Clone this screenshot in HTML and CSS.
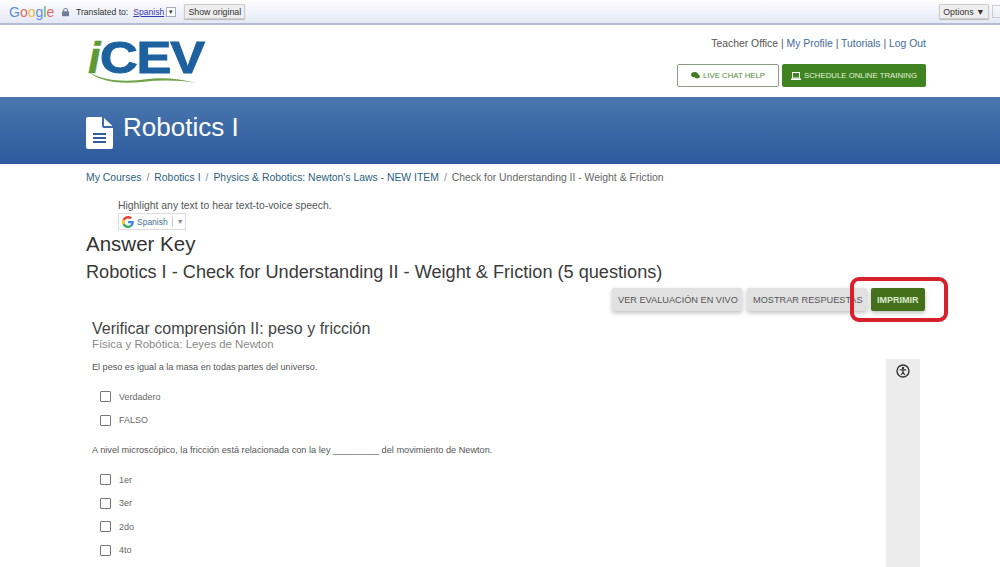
FILE: index.html
```html
<!DOCTYPE html>
<html lang="en">
<head>
    <meta charset="UTF-8">
    <title>Robotics I</title>
    <link rel="stylesheet" href="styles.css">
</head>
<body>
    <div class="translate-bar">
        <span class="google-word"><span class="g-blue">G</span><span class="g-red">o</span><span class="g-yellow">o</span><span class="g-blue">g</span><span class="g-green">l</span><span class="g-red">e</span></span>
        <svg class="lock" width="7" height="10" viewBox="0 0 9 11"><path d="M2 5V3.4a2.5 2.5 0 0 1 5 0V5" fill="none" stroke="#6f7f99" stroke-width="1.3"/><rect y="4.600" width="9" height="6.400" rx="1" fill="#6f7f99"/></svg>
        <span class="translated">Translated to:</span>
        <a class="lang-link">Spanish</a>
        <span class="lang-drop">▾</span>
        <button class="show-original">Show original</button>
        <button class="options">Options ▼</button>
        <span class="bar-close"></span>
    </div>

    <header class="site-header">
        <div class="logo">
            <div class="logo-word"><span class="logo-i">i</span><span class="logo-cev">CEV</span></div>
            <svg class="logo-swoosh" width="108" height="12" viewBox="0 0 108 12"><path d="M0 1C14 8 30 10 50 8 70 5 88 6 106 11 88 8 70 8 52 10 30 12 12 10 0 1Z" fill="#6fa548"/></svg>
        </div>
        <div class="header-right">
            <div class="user-links"><span>Teacher Office</span> | <a>My Profile</a> | <a>Tutorials</a> | <a>Log Out</a></div>
            <div class="header-btns">
                <a class="btn-chat">
                    <svg width="9" height="7" viewBox="0 0 10 8"><ellipse cx="4" cy="3" rx="4" ry="3" fill="#3f7d22"/><ellipse cx="7" cy="5" rx="3" ry="2.400" fill="#3f7d22"/></svg>
                    LIVE CHAT HELP
                </a>
                <a class="btn-train">
                    <svg width="10" height="8" viewBox="0 0 10 8"><rect x="1.500" y="0.500" width="7" height="5.500" fill="none" stroke="#fff"/><rect y="6.500" width="10" height="1.500" fill="#fff"/></svg>
                    SCHEDULE ONLINE TRAINING
                </a>
            </div>
        </div>
    </header>

    <div class="banner">
        <svg class="doc-icon" width="27" height="32" viewBox="0 0 27 32">
            <path d="M2 0H16V9a2 2 0 0 0 2 2H27V30a2 2 0 0 1-2 2H2a2 2 0 0 1-2-2V2a2 2 0 0 1 2-2Z" fill="#fff"/>
            <path d="M18 1 26.500 9H18Z" fill="#fff"/>
            <path d="M7 17H20M7 21H20M7 25H20" stroke="#2f5f9f" stroke-width="2"/>
        </svg>
        <h1>Robotics I</h1>
    </div>

    <div class="crumbs">
        <a>My Courses</a><i>/</i><a>Robotics I</a><i>/</i><a>Physics &amp; Robotics: Newton's Laws - NEW ITEM</a><i>/</i><span>Check for Understanding II - Weight &amp; Friction</span>
    </div>

    <div class="speech">
        <p>Highlight any text to hear text-to-voice speech.</p>
        <div class="lang-select">
            <svg width="12" height="12" viewBox="0 0 48 48">
                <path fill="#ea4335" d="M24 9.500c3.500 0 6.700 1.200 9.200 3.600l6.900-6.900C35.900 2.400 30.400 0 24 0 14.600 0 6.500 5.400 2.600 13.200l8 6.200C12.500 13.700 17.800 9.500 24 9.500z"/>
                <path fill="#4285f4" d="M47 24.500c0-1.600-.1-3.100-.4-4.500H24v9h13c-.6 3-2.200 5.500-4.800 7.200l7.700 6C44.400 37.600 47 31.600 47 24.500z"/>
                <path fill="#fbbc05" d="M10.600 28.600a14.500 14.500 0 0 1 0-9.200l-8-6.200a24 24 0 0 0 0 21.600l8-6.200z"/>
                <path fill="#34a853" d="M24 48c6.500 0 11.900-2.100 15.900-5.800l-7.700-6c-2.200 1.400-4.900 2.300-8.200 2.300-6.200 0-11.500-4.200-13.400-9.900l-8 6.200C6.500 42.600 14.600 48 24 48z"/>
            </svg>
            <span class="lang-name">Spanish</span>
            <span class="lang-arrow">▼</span>
        </div>
    </div>

    <h2 class="answer-title">Answer Key</h2>
    <h3 class="test-title">Robotics I - Check for Understanding II - Weight &amp; Friction (5 questions)</h3>

    <div class="test-actions">
        <button class="act-btn act-live">VER EVALUACIÓN EN VIVO</button>
        <button class="act-btn act-show">MOSTRAR RESPUESTAS</button>
        <button class="act-btn act-print">IMPRIMIR</button>
        <span class="red-mark"></span>
    </div>

    <div class="quiz-area">
        <div class="quiz">
            <div class="quiz-title">Verificar comprensión II: peso y fricción</div>
            <div class="quiz-sub">Física y Robótica: Leyes de Newton</div>

            <p class="question">El peso es igual a la masa en todas partes del universo.</p>
            <label class="choice"><span class="box"></span>Verdadero</label>
            <label class="choice"><span class="box"></span>FALSO</label>

            <p class="question q2">A nivel microscópico, la fricción está relacionada con la ley _________ del movimiento de Newton.</p>
            <label class="choice"><span class="box"></span>1er</label>
            <label class="choice"><span class="box"></span>3er</label>
            <label class="choice"><span class="box"></span>2do</label>
            <label class="choice"><span class="box"></span>4to</label>
        </div>
        <div class="side-tool">
            <svg width="14" height="14" viewBox="0 0 14 14">
                <circle cx="7" cy="7" r="6" fill="none" stroke="#333" stroke-width="1.400"/>
                <circle cx="7" cy="4" r="1.200" fill="#333"/>
                <path d="M3.800 5.800H10.200M7 5.800V8.200M7 8.200 5.200 11M7 8.200 8.800 11" fill="none" stroke="#333" stroke-width="1.200"/>
            </svg>
        </div>
    </div>
</body>
</html>
```

FILE: styles.css
```css
html, body {
    height: 567px;
    overflow: hidden;
}
body {
    margin: 0;
    font-family: "Liberation Sans", Arial, sans-serif;
    background: #fff;
    color: #444;
}
a {
    text-decoration: none;
}

/* translate bar */
.translate-bar {
    height: 23px;
    display: flex;
    align-items: center;
    padding-left: 9px;
    font-size: 8.600px;
    color: #333;
    background: linear-gradient(to bottom, #fdfdfe, #e4e9f6);
    border-bottom: 2px solid #b4bbd2;
}
.google-word {
    font-size: 14px;
    width: 44px;
    margin-right: 9px;
}
.g-blue { color: #5a8fe0; }
.g-red { color: #dd6a5c; }
.g-yellow { color: #e5b94a; }
.g-green { color: #5fae6c; }
.lock {
    margin-right: 7px;
}
.translated {
    margin-right: 5px;
}
.lang-link {
    color: #3a38b0;
    text-decoration: underline;
}
.lang-drop {
    width: 8px;
    height: 8px;
    margin-left: 2px;
    border: 1px solid #aab;
    background: #fff;
    font-size: 7px;
    line-height: 8px;
    text-align: center;
}
.show-original, .options {
    height: 15px;
    padding: 0;
    border: 1px solid #ccc;
    border-radius: 1px;
    background: #eee;
    font: 8.800px "Liberation Sans", Arial, sans-serif;
    color: #333;
    white-space: nowrap;
    box-shadow: 0 1px 1px #bbb;
}
.show-original {
    width: 61px;
    margin-left: 8px;
}
.options {
    width: 50px;
    margin-left: auto;
    margin-right: 3px;
}
.bar-close {
    width: 7px;
    height: 11px;
    border: 1px solid #ccc;
    border-right: none;
}

/* header */
.site-header {
    height: 72px;
    display: flex;
    justify-content: space-between;
    padding: 0 74px 0 88px;
}
.logo {
    position: relative;
    padding-top: 15px;
    width: 118px;
}
.logo-word {
    display: flex;
    font-size: 45px;
    line-height: 36px;
    font-weight: bold;
    color: #1d629f;
    -webkit-text-stroke: 1px #1d629f;
}
.logo-i {
    width: 12px;
    color: #5d9a35;
    font-style: italic;
    -webkit-text-stroke: 0.500px #5d9a35;
}
.logo-cev {
    letter-spacing: -1px;
    transform: scaleX(1.160);
    transform-origin: left center;
}
.logo-swoosh {
    position: absolute;
    left: 2px;
    top: 47px;
}
.header-right {
    display: flex;
    flex-direction: column;
    align-items: flex-end;
    padding-top: 12px;
}
.user-links {
    font-size: 10.400px;
    line-height: 14px;
    color: #4a5a72;
}
.user-links span {
    color: #555;
}
.user-links a {
    color: #3f6a99;
}
.header-btns {
    display: flex;
    gap: 3px;
    margin-top: 13px;
}
.btn-chat, .btn-train {
    height: 23px;
    display: flex;
    align-items: center;
    justify-content: center;
    gap: 3px;
    box-sizing: border-box;
    border-radius: 2px;
    font-size: 7.800px;
}
.btn-chat {
    width: 102px;
    border: 1px solid #8d9d84;
    color: #4f8a33;
    background: #fff;
}
.btn-train {
    width: 144px;
    background: #3f8420;
    color: #e6f0df;
}

/* blue banner */
.banner {
    height: 67px;
    display: flex;
    align-items: center;
    padding-left: 86px;
    box-sizing: border-box;
    background: linear-gradient(to bottom, #4a77ae, #2c5a9c);
}
.banner h1 {
    margin: -6px 0 0 10px;
    font-size: 26px;
    font-weight: normal;
    color: #fff;
}
.doc-icon {
    margin-top: 5px;
}

.crumbs {
    padding: 7px 0 0 86px;
    font-size: 10.400px;
    line-height: 13px;
    color: #666;
}
.crumbs a {
    color: #2d5f80;
}
.crumbs i {
    font-style: normal;
    margin: 0 5px;
    color: #888;
}

.speech {
    padding: 15px 0 0 118px;
}
.speech p {
    margin: 0;
    font-size: 10.400px;
    line-height: 13px;
    color: #555;
}
.lang-select {
    width: 68px;
    height: 17px;
    margin-top: 1px;
    display: flex;
    align-items: center;
    box-sizing: border-box;
    padding-left: 3px;
    border: 1px solid #ddd;
    font-size: 8.500px;
    color: #4a6f95;
}
.lang-name {
    margin-left: 3px;
    padding-right: 4px;
    border-right: 1px solid #ccc;
}
.lang-arrow {
    margin-left: 4px;
    font-size: 7px;
    color: #888;
}

.answer-title {
    margin: 2px 0 0 86px;
    font-size: 20.500px;
    line-height: 24px;
    font-weight: normal;
    color: #333;
}
.test-title {
    margin: 6px 0 0 86px;
    font-size: 18.150px;
    line-height: 20px;
    font-weight: normal;
    color: #3a3a3a;
}

.test-actions {
    position: relative;
    display: flex;
    justify-content: flex-end;
    gap: 4px;
    padding: 6px 75px 0 0;
}
.act-btn {
    height: 23px;
    border: none;
    border-radius: 2px;
    padding: 0 0 0 6px;
    text-align: left;
    font: 9.200px "Liberation Sans", Arial, sans-serif;
    white-space: nowrap;
    background: #e1e1e1;
    color: #555;
    box-shadow: 0 2px 4px rgba(0, 0, 0, 0.25);
}
.act-live {
    width: 130px;
    margin-right: 1px;
}
.act-show {
    width: 120px;
}
.act-print {
    width: 54px;
    background: #44701c;
    color: #dcebc9;
    font-size: 9px;
    font-weight: bold;
}
.red-mark {
    position: absolute;
    left: 850px;
    top: -5px;
    width: 90px;
    height: 37px;
    border: 4px solid #d81f2c;
    border-radius: 9px;
}

/* quiz */
.quiz-area {
    display: flex;
    justify-content: space-between;
    padding: 8px 80px 0 92px;
}
.quiz-title {
    font-size: 16px;
    line-height: 20px;
    color: #444;
}
.quiz-sub {
    margin-top: -2px;
    font-size: 11.400px;
    line-height: 14px;
    color: #888;
}
.question {
    margin: 10px 0 0;
    height: 24px;
    font-size: 9.100px;
    line-height: 12px;
    color: #555;
}
.q2 {
    margin-top: 12px;
    font-size: 9.200px;
}
.choice {
    height: 23.500px;
    display: flex;
    align-items: center;
    padding-left: 8px;
    font-size: 9px;
    color: #666;
}
.box {
    width: 9px;
    height: 9px;
    margin-right: 8px;
    border: 1px solid #777;
    border-radius: 1px;
}
.side-tool {
    width: 34px;
    height: 208px;
    margin-top: 40px;
    padding-top: 5px;
    box-sizing: border-box;
    background: #ececec;
    text-align: center;
}
```
